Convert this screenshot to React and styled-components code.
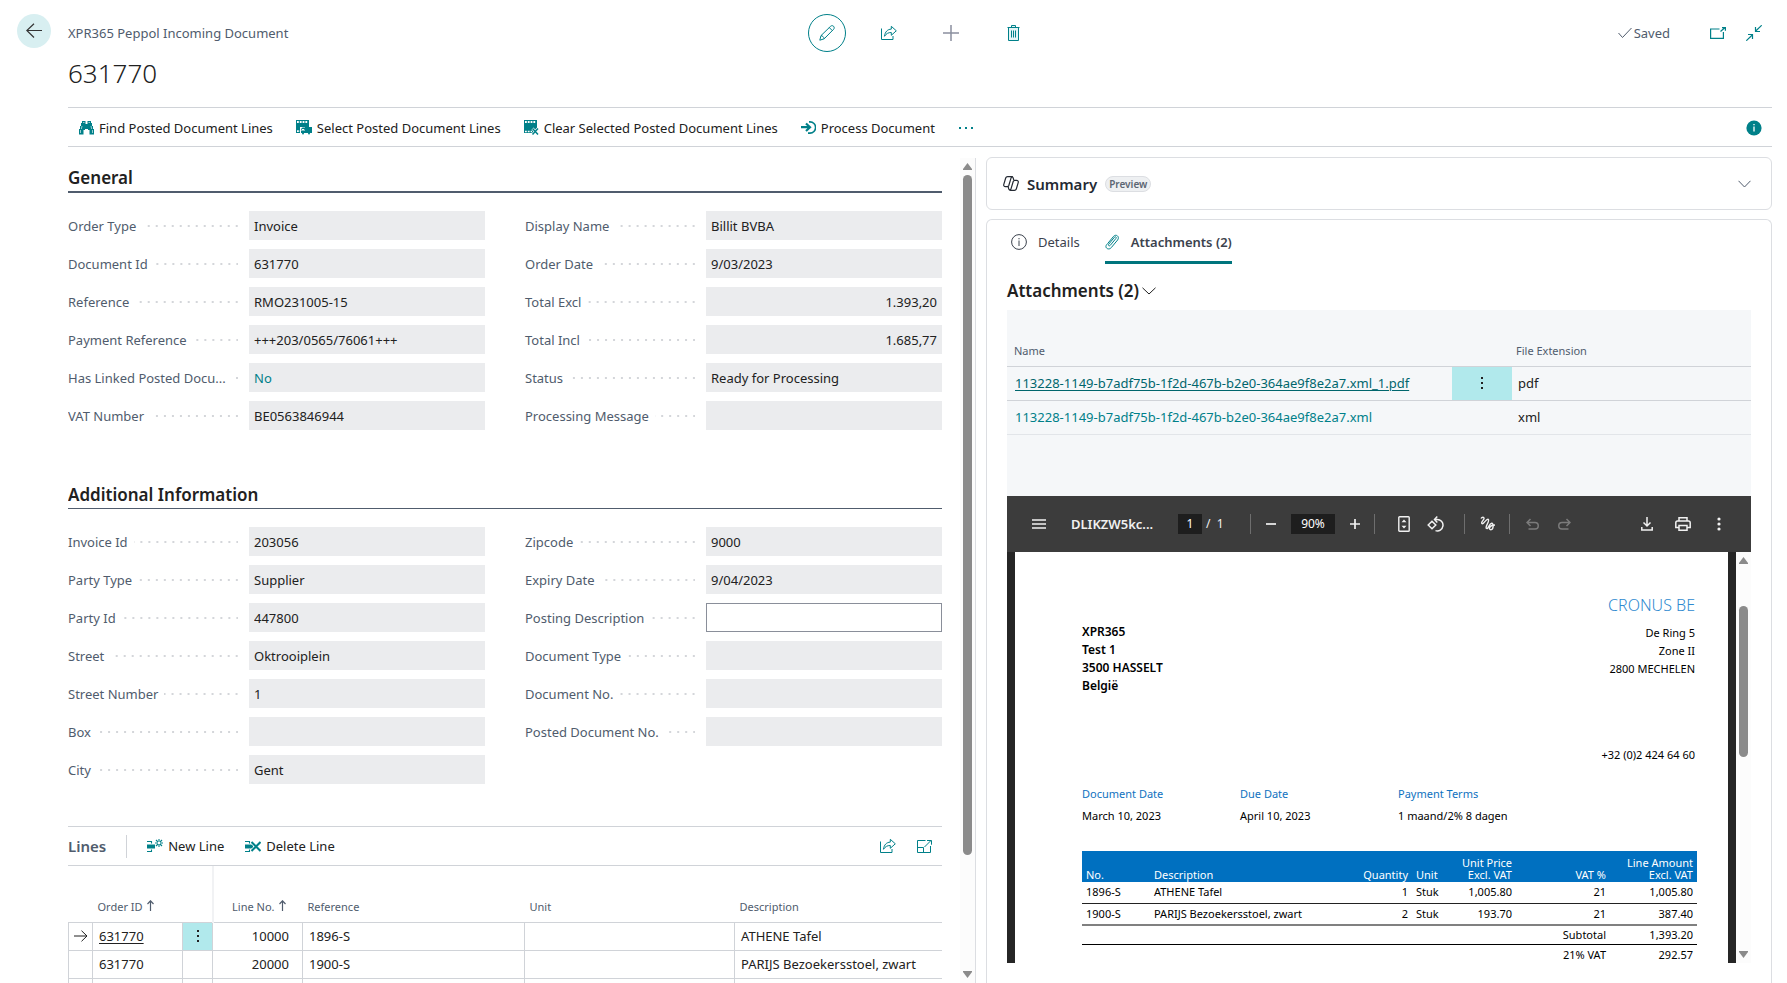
import React from 'react'
import styled, { createGlobalStyle, css } from 'styled-components'

const teal = '#008089'
const muted = '#505c6d'
const ink = '#212121'
const line = '#d0d3d8'

const GlobalStyle = createGlobalStyle`
  *, *::before, *::after { box-sizing: border-box; }
  body {
    margin: 0;
    background: #fff;
    color: ${ink};
    font-family: "Noto Sans", "Open Sans", sans-serif;
    font-size: 13px;
    line-height: 18px;
  }
  button, input { font: inherit; color: inherit; }
  h1, h2, h3, p { margin: 0; font-weight: inherit; }
`

/* ---------- shared bits ---------- */

const Svg = styled.svg`
  display: block;
  flex: none;
  width: ${(p) => p.$w || 16}px;
  height: ${(p) => p.$h || 16}px;
  fill: none;
  stroke: currentColor;
  stroke-width: ${(p) => p.$stroke || 1};
`

const Icon = ({ w = 16, h = 16, stroke, children }) => (
  <Svg $w={w} $h={h} $stroke={stroke} viewBox={`0 0 ${w} ${h}`} aria-hidden="true">
    {children}
  </Svg>
)

const PlainButton = styled.button`
  display: flex;
  align-items: center;
  padding: 0;
  border: 0;
  background: none;
  cursor: pointer;
  white-space: nowrap;
`

const IconButton = styled(PlainButton)`
  justify-content: center;
  color: ${(p) => p.$color || teal};
`

/* ---------- icons ---------- */

const BackIcon = () => (
  <Icon><path d="M16 7.500H.8M8 .8.8 7.500 8 14.500" stroke="currentColor" strokeWidth="1.200" /></Icon>
)
const PencilIcon = () => (
  <Icon>
    <path d="M.8 15.200 2 10.600 11.600 1.300c.9-.9 2.200-.8 3 0s.8 2.100 0 3L5.200 13.800.8 15.200ZM10.300 2.600l3.100 3.100M2 10.600c1.600.2 2.800 1.400 3.200 3.200" />
  </Icon>
)
const ShareIcon = () => (
  <Icon>
    <path d="M.5 3.500V14.500H12V11" />
    <path d="M3.500 11.300C4 6.700 6.600 4.300 10.300 4.100V1.300L15.300 5.800 10.300 10.300V7.500C7.300 7.500 5.300 8.500 3.500 11.300Z" />
  </Icon>
)
const PlusIcon = () => (
  <Icon stroke="1.500"><path d="M8 0v16M0 8h16" /></Icon>
)
const TrashIcon = () => (
  <Icon w={13} h={16}>
    <path d="M.5 2.500h12M4.500 2.500V.5h4v2M1.500 2.500v13h10v-13" fill="#e4f4f5" />
    <path d="M4.500 5.500v7M6.500 5.500v7M8.500 5.500v7" />
  </Icon>
)
const CheckIcon = () => (
  <Icon w={14} h={12}><path d="m.5 6 4 4.500L13.500 1" /></Icon>
)
const PopOutIcon = () => (
  <Icon w={16} h={12}>
    <path d="M9.500 2H.6v9.400h12.800V5" strokeWidth="1.200" />
    <path d="m10.500 4.500 4-3.500M12 .6h3.400v3.200" strokeWidth="1.200" />
  </Icon>
)
const CollapseIcon = () => (
  <Icon stroke="1.200">
    <path d="M15.700.3 9.500 6.300M9.500 2v4.500H14M.3 15.700 6.500 9.700M2 9.500h4.500V14" />
  </Icon>
)
const BinocularsIcon = () => (
  <Icon w={15} h={14}>
    <path
      d="M3 0h3.500v3h2V0H12v2h1v3h1v3h1v5.500h-4.500V9H9V8H6v1H4.500v4.500H0V8h1V5h1V2h1V0Z"
      fill="currentColor"
      stroke="none"
    />
    <path d="M4 1.500h1.500M9.500 1.500H11M1.500 9v3M13.500 9v3M3 5l-.7 3M12 5l.7 3" stroke="#fff" strokeWidth=".6" />
  </Icon>
)
const FilmBase = () => (
  <>
    <path d="M0 0h13v13H0z" fill="currentColor" stroke="none" />
    <path d="M1 2h11" stroke="#fff" strokeWidth="2" strokeDasharray="1.800 1" />
  </>
)
const FilmSelectIcon = () => (
  <Icon w={16} h={15}>
    <FilmBase />
    <path d="M1 11.200h3" stroke="#fff" strokeWidth="1.800" strokeDasharray="1.800 1" />
    <path d="M4 7h12v8H4z" fill="#fff" stroke="none" />
    <path d="M9 7h7v6H9zM5 9l1.500-1.500H9V13H5V9Z" fill="currentColor" stroke="none" />
    <path d="M6 11V9.500h2V11" stroke="#fff" />
    <circle cx="7" cy="13.500" r="1" fill="currentColor" stroke="none" />
    <circle cx="13" cy="13.500" r="1" fill="currentColor" stroke="none" />
  </Icon>
)
const FilmClearIcon = () => (
  <Icon w={15} h={15}>
    <FilmBase />
    <path d="M1 11.500h7" stroke="#fff" strokeWidth="1.300" strokeDasharray="1.800 1" />
    <path d="m8.500 8.500 5.500 6M14 8.500l-5.500 6" stroke="#fff" strokeWidth="2.600" />
    <path d="m8.500 8.500 5.500 6M14 8.500l-5.500 6" strokeWidth="1.500" />
  </Icon>
)
const ProcessIcon = () => (
  <Icon w={15} h={13}>
    <path d="M0 6.200h8M5 2.500l4 3.700-4 3.800" strokeWidth="2.200" />
    <path d="M8 .9h1a5.500 5.500 0 0 1 0 11.200H7" strokeWidth="1.600" />
  </Icon>
)
const DotsIcon = () => (
  <Icon w={16} h={4}>
    <path d="M1 1h2v2H1zM7 1h2v2H7zM13 1h2v2h-2z" fill="currentColor" stroke="none" />
  </Icon>
)
const InfoSolidIcon = () => (
  <Icon>
    <circle cx="8" cy="8" r="7.600" fill="currentColor" stroke="none" />
    <path d="M8 6.500V11.500M8 4v1.200" stroke="#fff" strokeWidth="1.300" />
  </Icon>
)
const CopilotIcon = () => (
  <Icon w={16} h={15} stroke="1.200">
    <path d="M10.800 4.200 10.200 2C9.900 1 9.400.6 8.500.6H4.600C3.600.6 3 1 2.700 2L.8 8.300c-.4 1.400.3 2.400 1.700 2.400h1.700c.8 0 1.300-.3 1.600-1.200L8 2.200C8.300 1.200 8.800.7 9.700.7" />
    <path d="m5.200 10.800.6 2.200c.3 1 .8 1.400 1.700 1.400h3.900c1 0 1.600-.4 1.900-1.400l1.900-6.300c.4-1.400-.3-2.400-1.700-2.400h-1.700c-.8 0-1.300.3-1.600 1.200L8 12.800c-.3 1-.8 1.500-1.700 1.500" />
  </Icon>
)
const ChevronIcon = ({ w = 14, h = 8 }) => (
  <Icon w={w} h={h}><path d={`M.5.800 ${w / 2} ${h - 1} ${w - 0.5} .8`} /></Icon>
)
const InfoIcon = () => (
  <Icon>
    <circle cx="8" cy="8" r="7.400" />
    <path d="M8 6.500v5.500M8 4v1.300" />
  </Icon>
)
const ClipIcon = () => (
  <Icon w={15} h={16}>
    <path d="M5.300 11.300 10.900 4.500M2.700 9.500 8.600 2.300C10.900-.3 15 2.500 12.700 5.900L6.300 13.600C3.700 16.700-.8 13.800 1.600 10.800L2.700 9.500M10.900 4.500C11.900 3.300 10.500 2 9.400 3.300L3.800 10.100C2.800 11.400 4.300 12.600 5.300 11.300" />
  </Icon>
)
const RowsBase = () => (
  <>
    <path d="M0 2.500h4.500v2M0 12.500h4.500v-2" strokeWidth="1.100" />
    <path d="M0 5.500h8v4H0z" fill="currentColor" stroke="none" />
  </>
)
const NewLineIcon = () => (
  <Icon w={16} h={15}>
    <RowsBase />
    <path d="M12 0v8M8 4h8M9 1l6 6M15 1 9 7" strokeWidth="1.100" />
    <circle cx="12" cy="4" r="1.400" fill="#fff" stroke="none" />
  </Icon>
)
const DeleteLineIcon = () => (
  <Icon w={16} h={15}>
    <RowsBase />
    <path d="m6.500 3 9 9M15.500 3l-9 9" stroke="#fff" strokeWidth="3.500" />
    <path d="m6.500 3 9 9M15.500 3l-9 9" strokeWidth="2" />
  </Icon>
)
const ExpandIcon = () => (
  <Icon w={15} h={13}>
    <path d="M8.500.5H.5v12h13V6M.5 7.500h6v5M7.500 7l6.300-6.300M10 .5h4.500v4.200" />
  </Icon>
)
const RowArrowIcon = () => (
  <Icon w={14} h={12}><path d="M0 6h13M7.500.7 13 6l-5.500 5.300" /></Icon>
)
const SortIcon = () => (
  <Icon w={7} h={11} stroke="1.200"><path d="M3.500 11V1M.5 4l3-3.200 3 3.200" /></Icon>
)
const MoreIcon = ({ round }) => (
  <Icon w={4} h={16}>
    {[3, 8, 13].map((y) =>
      round
        ? <circle key={y} cx="2" cy={y} r="1.600" fill="currentColor" stroke="none" />
        : <path key={y} d={`M1 ${y - 1}h2v2H1z`} fill="currentColor" stroke="none" />
    )}
  </Icon>
)

/* ---------- page header ---------- */

const Page = styled.div`
  display: flex;
  height: 100vh;
  min-height: 600px;
  overflow: hidden;
`

const BackColumn = styled.div`
  flex: none;
  width: 68px;
  padding: 14px 17px;
`

const BackButton = styled(IconButton)`
  width: 34px;
  height: 34px;
  border-radius: 50%;
  background: #d8eff1;
`

const Main = styled.main`
  flex: 1;
  min-width: 0;
  display: flex;
  flex-direction: column;
  padding-right: 15px;
`

const TopRow = styled.header`
  display: grid;
  grid-template-columns: 1fr auto 1fr;
  align-items: center;
  height: 38px;
  margin-top: 14px;
  color: ${muted};
`

const CenterActions = styled.div`
  display: flex;
  gap: 24px;
`

const RoundAction = styled(IconButton)`
  width: 38px;
  height: 38px;
  border-radius: 50%;
  border: ${(p) => (p.$active ? `1px solid ${teal}` : '0')};
`

const EndActions = styled.div`
  display: flex;
  justify-content: flex-end;
  align-items: center;
  gap: 20px;
  padding-right: 10px;
`

const Saved = styled.span`
  display: flex;
  align-items: center;
  gap: 2px;
  margin-right: 20px;
`

const DocTitle = styled.h1`
  margin-bottom: 16px;
  padding-top: 3px;
  font-size: 26px;
  font-weight: 300;
  line-height: 36px;
`

const ActionBar = styled.div`
  display: flex;
  align-items: center;
  height: 40px;
  flex: none;
  padding: 1px 10px 0 11px;
  border-top: 1px solid ${line};
  border-bottom: 1px solid ${line};
`

const ActionGroup = styled.div`
  display: flex;
  align-items: center;
  gap: 23px;
  flex: 1;
`

const ActionButton = styled(PlainButton)`
  gap: 5px;
  svg { color: ${teal}; }
`

const actions = [
  ['Find Posted Document Lines', BinocularsIcon],
  ['Select Posted Document Lines', FilmSelectIcon],
  ['Clear Selected Posted Document Lines', FilmClearIcon],
  ['Process Document', ProcessIcon],
]

const PageHeader = () => (
  <>
    <TopRow>
      <span>XPR365 Peppol Incoming Document</span>
      <CenterActions>
        <RoundAction $active aria-label="Edit"><PencilIcon /></RoundAction>
        <RoundAction aria-label="Share"><ShareIcon /></RoundAction>
        <RoundAction $color="#8a8f9e" aria-label="New"><PlusIcon /></RoundAction>
        <RoundAction aria-label="Delete"><TrashIcon /></RoundAction>
      </CenterActions>
      <EndActions>
        <Saved><CheckIcon />Saved</Saved>
        <IconButton aria-label="Open in new window"><PopOutIcon /></IconButton>
        <IconButton aria-label="Collapse"><CollapseIcon /></IconButton>
      </EndActions>
    </TopRow>
    <DocTitle>631770</DocTitle>
    <ActionBar>
      <ActionGroup>
        {actions.map(([label, Glyph]) => (
          <ActionButton key={label}><Glyph />{label}</ActionButton>
        ))}
        <IconButton aria-label="More options"><DotsIcon /></IconButton>
      </ActionGroup>
      <IconButton aria-label="Toggle FactBox"><InfoSolidIcon /></IconButton>
    </ActionBar>
  </>
)

/* ---------- scrollbar ---------- */

const ScrollTrack = styled.div`
  display: flex;
  flex-direction: column;
  align-items: center;
  flex: none;
  width: 15px;
  background: #fcfcfc;
  color: #8b8b8b;
`

const ScrollEnd = styled.div`
  display: flex;
  align-items: center;
  flex: none;
  height: 17px;
`

const ScrollSpace = styled.div`
  flex: ${(p) => p.$size} 0 0;
`

const ScrollThumb = styled.div`
  flex: ${(p) => p.$size} 0 0;
  width: 9px;
  border-radius: 5px;
  background: #8b8b8b;
`

const ScrollBar = ({ before, size }) => (
  <ScrollTrack aria-hidden="true">
    <ScrollEnd>
      <Icon w={9} h={7}><path d="M4.500 0 9 6v1H0V6z" fill="currentColor" stroke="none" /></Icon>
    </ScrollEnd>
    <ScrollSpace $size={before} />
    <ScrollThumb $size={size} />
    <ScrollSpace $size={100 - before - size} />
    <ScrollEnd>
      <Icon w={9} h={7}><path d="M0 0h9v1L4.500 7 0 1z" fill="currentColor" stroke="none" /></Icon>
    </ScrollEnd>
  </ScrollTrack>
)

/* ---------- card form ---------- */

const Body = styled.div`
  flex: 1;
  min-height: 0;
  display: grid;
  grid-template-columns: minmax(0, 908fr) minmax(0, 786fr);
  gap: 10px;
`

const FormPane = styled.div`
  display: flex;
  min-height: 0;
`

const FormScroll = styled.div`
  flex: 1;
  min-width: 0;
  overflow: hidden;
  padding-right: 18px;
`

const FormRail = styled.div`
  display: flex;
  margin-top: 11px;
  border-right: 1px solid #dcdee2;
`

const SectionTitle = styled.h2`
  margin-top: ${(p) => p.$top}px;
  padding-bottom: 1px;
  border-bottom: ${(p) => p.$rule}px solid ${muted};
  font-size: 17px;
  font-weight: 600;
  line-height: 24px;
`

const FieldGrid = styled.div`
  display: grid;
  grid-template-columns: 1fr 1fr;
  column-gap: 40px;
  padding-top: 18px;
`

const FieldColumn = styled.div`
  display: flex;
  flex-direction: column;
  gap: 9px;
`

const FieldRow = styled.div`
  display: flex;
  height: 29px;
`

const FieldLabel = styled.label`
  display: flex;
  align-items: center;
  width: 181px;
  padding-right: 11px;
  color: ${muted};
  white-space: nowrap;
  &::after {
    content: "";
    flex: 1;
    height: 2px;
    margin-left: 6px;
    background: linear-gradient(90deg, transparent 6px, #d4d6da 6px) right top / 8px 2px repeat-x;
  }
`

const FieldInput = styled.input`
  flex: 1;
  min-width: 0;
  padding: 0 5px;
  border: ${(p) => (p.readOnly ? '0' : '1px solid #8a8f9a')};
  border-radius: 0;
  outline: 0;
  background: ${(p) => (p.readOnly ? '#ebecee' : '#fff')};
  color: ${(p) => (p.$link ? teal : ink)};
  text-align: ${(p) => (p.$number ? 'right' : 'left')};
`

const general = [
  [
    { label: 'Order Type', value: 'Invoice' },
    { label: 'Document Id', value: '631770' },
    { label: 'Reference', value: 'RMO231005-15' },
    { label: 'Payment Reference', value: '+++203/0565/76061+++' },
    { label: 'Has Linked Posted Docu...', value: 'No', link: true },
    { label: 'VAT Number', value: 'BE0563846944' },
  ],
  [
    { label: 'Display Name', value: 'Billit BVBA' },
    { label: 'Order Date', value: '9/03/2023' },
    { label: 'Total Excl', value: '1.393,20', number: true },
    { label: 'Total Incl', value: '1.685,77', number: true },
    { label: 'Status', value: 'Ready for Processing' },
    { label: 'Processing Message', value: '' },
  ],
]

const additional = [
  [
    { label: 'Invoice Id', value: '203056' },
    { label: 'Party Type', value: 'Supplier' },
    { label: 'Party Id', value: '447800' },
    { label: 'Street', value: 'Oktrooiplein' },
    { label: 'Street Number', value: '1' },
    { label: 'Box', value: '' },
    { label: 'City', value: 'Gent' },
  ],
  [
    { label: 'Zipcode', value: '9000' },
    { label: 'Expiry Date', value: '9/04/2023' },
    { label: 'Posting Description', value: '', editable: true },
    { label: 'Document Type', value: '' },
    { label: 'Document No.', value: '' },
    { label: 'Posted Document No.', value: '' },
  ],
]

const Fields = ({ columns }) => (
  <FieldGrid>
    {columns.map((fields, i) => (
      <FieldColumn key={i}>
        {fields.map((f) => {
          const id = f.label.toLowerCase().replace(/[^a-z]+/g, '-')
          return (
            <FieldRow key={id}>
              <FieldLabel htmlFor={id}>{f.label}</FieldLabel>
              <FieldInput
                id={id}
                defaultValue={f.value}
                readOnly={!f.editable}
                $link={f.link}
                $number={f.number}
              />
            </FieldRow>
          )
        })}
      </FieldColumn>
    ))}
  </FieldGrid>
)

/* ---------- lines ---------- */

const LinesBar = styled.div`
  display: flex;
  align-items: center;
  height: 40px;
  margin-top: 42px;
  padding-right: 10px;
  border-top: 1px solid ${line};
  border-bottom: 1px solid ${line};
`

const LinesTitle = styled.h2`
  margin-right: 20px;
  padding-right: 20px;
  border-right: 1px solid ${line};
  color: ${muted};
  font-size: 15px;
  font-weight: 600;
  line-height: 23px;
`

const LinesActions = styled.div`
  display: flex;
  flex: 1;
  gap: 21px;
`

const LinesTools = styled.div`
  display: flex;
  gap: 21px;
`

const LinesTable = styled.table`
  width: 100%;
  table-layout: fixed;
  border-collapse: collapse;
`

const LineHead = styled.th`
  height: 56px;
  padding: 0 5px 6px;
  vertical-align: bottom;
  color: ${muted};
  font-size: 11px;
  font-weight: 400;
  text-align: ${(p) => (p.$right ? 'right' : 'left')};
  padding-right: ${(p) => (p.$right ? 17 : 5)}px;
  border-right: ${(p) => (p.$frozen ? '2px solid #f1f2f4' : '0')};
  svg { display: inline-block; margin-left: 4px; }
`

const LineCell = styled.td`
  height: 28px;
  padding: 0 6px;
  border: 1px solid ${line};
  white-space: nowrap;
  text-align: ${(p) => (p.$right ? 'right' : 'left')};
  ${(p) => p.$right && css`padding-right: 13px;`}
  ${(p) => p.$tight && css`padding: 0; svg { margin: 0 auto; }`}
  background: ${(p) => (p.$hot ? '#b1e9ec' : 'none')};
  &:last-child { border-right: 0; }
`

const OrderLink = styled.a`
  color: ${ink};
  text-decoration: ${(p) => (p.$current ? 'underline' : 'none')};
  text-underline-offset: 2px;
`

const FullButton = styled(IconButton)`
  width: 100%;
  height: 27px;
  color: ${ink};
`

const orderLines = [
  { order: '631770', no: '10000', reference: '1896-S', description: 'ATHENE Tafel' },
  { order: '631770', no: '20000', reference: '1900-S', description: 'PARIJS Bezoekersstoel, zwart' },
  {},
]

const Lines = () => (
  <section>
    <LinesBar>
      <LinesTitle>Lines</LinesTitle>
      <LinesActions>
        <ActionButton><NewLineIcon />New Line</ActionButton>
        <ActionButton><DeleteLineIcon />Delete Line</ActionButton>
      </LinesActions>
      <LinesTools>
        <IconButton aria-label="Share lines"><ShareIcon /></IconButton>
        <IconButton aria-label="Focus mode"><ExpandIcon /></IconButton>
      </LinesTools>
    </LinesBar>
    <LinesTable>
      <colgroup>
        <col width="24" /><col width="90" /><col width="30" /><col width="90" />
        <col width="222" /><col width="210" /><col />
      </colgroup>
      <thead>
        <tr>
          <LineHead />
          <LineHead>Order ID<SortIcon /></LineHead>
          <LineHead $frozen />
          <LineHead $right>Line No.<SortIcon /></LineHead>
          <LineHead>Reference</LineHead>
          <LineHead>Unit</LineHead>
          <LineHead>Description</LineHead>
        </tr>
      </thead>
      <tbody>
        {orderLines.map((row, i) => (
          <tr key={i}>
            <LineCell $tight>{i === 0 && <RowArrowIcon />}</LineCell>
            <LineCell>{row.order && <OrderLink href="#order" $current={i === 0}>{row.order}</OrderLink>}</LineCell>
            <LineCell $tight $hot={i === 0}>
              {i === 0 && <FullButton aria-label="Show more options"><MoreIcon /></FullButton>}
            </LineCell>
            <LineCell $right>{row.no}</LineCell>
            <LineCell>{row.reference}</LineCell>
            <LineCell />
            <LineCell>{row.description}</LineCell>
          </tr>
        ))}
      </tbody>
    </LinesTable>
  </section>
)

/* ---------- fact box ---------- */

const FactPane = styled.aside`
  display: flex;
  flex-direction: column;
  gap: 9px;
  min-height: 0;
  padding-top: 10px;
`

const SummaryCard = styled.section`
  display: flex;
  align-items: center;
  flex: none;
  height: 53px;
  padding: 0 20px 0 16px;
  border: 1px solid #dcdee2;
  border-radius: 6px;
  color: #242a33;
`

const SummaryTitle = styled.h2`
  margin: 0 8px;
  font-size: 15px;
  font-weight: 600;
`

const Pill = styled.span`
  margin-right: auto;
  padding: 0 3px;
  border: 1px solid #dcdee2;
  border-radius: 8px;
  background: #eef0f2;
  color: #5c6673;
  font-size: 10px;
  font-weight: 600;
  line-height: 14px;
`

const AttachCard = styled.section`
  display: flex;
  flex-direction: column;
  flex: 1;
  min-height: 0;
  padding: 0 20px 20px;
  border: 1px solid #dcdee2;
  border-bottom: 0;
  border-radius: 6px 6px 0 0;
`

const Tabs = styled.div`
  display: flex;
  gap: 25px;
  flex: none;
  height: 44px;
  padding-left: 4px;
`

const Tab = styled(PlainButton)`
  gap: 11px;
  padding-top: 3px;
  border-bottom: 3px solid ${(p) => (p.$active ? '#00757d' : 'transparent')};
  font-weight: ${(p) => (p.$active ? 600 : 400)};
  color: #3b424d;
  svg { color: ${(p) => (p.$active ? teal : 'inherit')}; }
`

const AttachTitle = styled(PlainButton)`
  flex: none;
  gap: 3px;
  height: 46px;
  padding-top: 8px;
  font-size: 17px;
  font-weight: 600;
`

const FilesBox = styled.div`
  flex: none;
  padding-bottom: 61px;
  background: #f5f7f9;
`

const FilesTable = styled.table`
  width: 100%;
  table-layout: fixed;
  border-collapse: collapse;
`

const FileHead = styled.th`
  height: 56px;
  padding: 0 0 6px ${(p) => (p.$ext ? 4 : 7)}px;
  border-bottom: 1px solid ${line};
  vertical-align: bottom;
  color: ${muted};
  font-size: 11px;
  font-weight: 400;
  text-align: left;
`

const FileCell = styled.td`
  height: 34px;
  padding: 0 0 0 ${(p) => p.$pad || 0}px;
  border-bottom: 1px solid ${(p) => (p.$current ? line : '#e2e5e9')};
  background: ${(p) => (p.$hot ? '#b1e9ec' : 'none')};
  white-space: nowrap;
`

const FileLink = styled.a`
  color: ${(p) => (p.$current ? '#00666d' : teal)};
  text-decoration: ${(p) => (p.$current ? 'underline' : 'none')};
  text-underline-offset: 2px;
`

const files = [
  { name: '113228-1149-b7adf75b-1f2d-467b-b2e0-364ae9f8e2a7.xml_1.pdf', ext: 'pdf' },
  { name: '113228-1149-b7adf75b-1f2d-467b-b2e0-364ae9f8e2a7.xml', ext: 'xml' },
]

/* ---------- pdf viewer ---------- */

const Viewer = styled.div`
  flex: 1;
  min-height: 0;
  display: flex;
  flex-direction: column;
  background: #262626;
`

const ViewerBar = styled.div`
  display: flex;
  align-items: center;
  flex: none;
  height: 56px;
  padding: 0 20px 0 25px;
  background: #3c3c3c;
  color: #f1f1f1;
`

const ViewerTitle = styled.span`
  width: 84px;
  margin: 0 23px 0 25px;
  font-weight: 600;
  white-space: nowrap;
`

const ViewerInput = styled.input`
  width: ${(p) => p.$w}px;
  height: 20px;
  padding: 0;
  border: 0;
  background: #1e1e1e;
  color: #fff;
  font-size: 12px;
  text-align: center;
`

const PageCount = styled.span`
  width: 22px;
  margin-left: 4px;
  font-size: 12px;
  white-space: pre;
`

const Rule = styled.span`
  width: 1px;
  height: 20px;
  margin: 0 ${(p) => p.$right}px 0 ${(p) => p.$left}px;
  background: #6e6e6e;
`

const Cluster = styled.div`
  display: flex;
  align-items: center;
  gap: ${(p) => p.$gap}px;
`

const ViewerEnd = styled(Cluster)`
  margin-left: auto;
  button { width: 24px; }
`

const ViewerBody = styled.div`
  flex: 1;
  min-height: 0;
  display: flex;
  padding-left: 8px;
`

const Sheet = styled.article`
  flex: 1;
  min-width: 0;
  overflow: hidden;
  margin-right: 8px;
  padding: 41px 31px 0 67px;
  background: #fff;
  color: #000;
  font-size: 11px;
`

const Parties = styled.div`
  display: flex;
  justify-content: space-between;
  padding-right: 2px;
`

const Buyer = styled.address`
  padding-top: 30px;
  font-size: 12px;
  font-style: normal;
  font-weight: 600;
`

const Seller = styled.address`
  font-style: normal;
  text-align: right;
`

const SellerName = styled.p`
  margin-bottom: 7px;
  color: #2f8ad0;
  font-size: 16px;
  font-weight: 300;
  line-height: 24px;
`

const Phone = styled.p`
  margin-top: 68px;
`

const Terms = styled.dl`
  display: grid;
  grid-template-columns: repeat(3, 158px);
  margin: 21px 0 26px;
  dt { margin-bottom: 4px; color: #0f72c0; }
  dd { margin: 0; }
`

const InvoiceTable = styled.table`
  width: 100%;
  table-layout: fixed;
  border-collapse: collapse;
  line-height: 12px;
  th {
    height: 31px;
    padding: 0 4px 1px;
    background: #0070c0;
    color: #fff;
    font-weight: 400;
    vertical-align: bottom;
  }
  td { padding: 0 4px; }
`

const InvoiceHead = styled.th`
  text-align: ${(p) => (p.$right ? 'right' : 'left')};
`

const InvoiceCell = styled.td`
  text-align: ${(p) => (p.$right ? 'right' : 'left')};
  white-space: nowrap;
`

const InvoiceRow = styled.tr`
  height: ${(p) => p.$h}px;
  border-bottom: ${(p) => p.$rule || '0'};
`

const PdfToolbar = () => (
  <ViewerBar>
    <IconButton $color="inherit" aria-label="Menu">
      <Icon w={14} h={10} stroke="1.500"><path d="M0 1h14M0 5h14M0 9h14" /></Icon>
    </IconButton>
    <ViewerTitle>DLIKZW5kc...</ViewerTitle>
    <ViewerInput $w={24} aria-label="Page number" defaultValue="1" />
    <PageCount>{'/  1'}</PageCount>
    <Rule $left={22} $right={14} />
    <Cluster $gap={14}>
      <IconButton $color="inherit" aria-label="Zoom out">
        <Icon w={12} h={12} stroke="1.700"><path d="M1 6h10" /></Icon>
      </IconButton>
      <ViewerInput $w={44} aria-label="Zoom level" defaultValue="90%" />
      <IconButton $color="inherit" aria-label="Zoom in">
        <Icon w={12} h={12} stroke="1.700"><path d="M1 6h10M6 1v10" /></Icon>
      </IconButton>
    </Cluster>
    <Rule $left={13} $right={23} />
    <Cluster $gap={17}>
      <IconButton $color="inherit" aria-label="Fit to page">
        <Icon w={12} h={16} stroke="1.400">
          <rect x=".8" y=".8" width="10.400" height="14.400" rx=".8" />
          <path d="m6 3.500 2.500 2.700h-5zM6 12.500l2.500-2.700h-5z" fill="currentColor" stroke="none" />
        </Icon>
      </IconButton>
      <IconButton $color="inherit" aria-label="Rotate">
        <Icon w={18} h={16} stroke="1.500">
          <path d="m1.200 9 3.800-3.800L8.800 9 5 12.800zM7.500 3.500h2.500a5.700 5.700 0 1 1-1.500 11.100M10.300.6 7.500 3.500l2.800 2.900" />
        </Icon>
      </IconButton>
    </Cluster>
    <Rule $left={19} $right={15} />
    <IconButton $color="inherit" aria-label="Annotate">
      <Icon w={15} h={15} stroke="1.400">
        <path d="M1 2.500C2 .8 4.200.8 4 2.600 3.700 4.300.9 5.800 1.800 7.400 3.200 9.200 6.300 2.300 8.200 3.400 10.200 4.900 4.900 10.400 6.300 12.300 8.200 14 9 7.500 11.600 7.300c2.400 0 1.900 6.400-.7 6.400-2.600-.1-1.900-4.500 4.100-4.700" />
      </Icon>
    </IconButton>
    <Rule $left={14} $right={16} />
    <Cluster $gap={19}>
      <IconButton $color="#7b7b7b" aria-label="Undo">
        <Icon w={13} h={12} stroke="1.500"><path d="M4.500 1 1 4.500 4.500 8M1 4.500h8a3 3 0 0 1 0 6.500H2.500" /></Icon>
      </IconButton>
      <IconButton $color="#7b7b7b" aria-label="Redo">
        <Icon w={13} h={12} stroke="1.500"><path d="M8.500 1 12 4.500 8.500 8M12 4.500H4a3 3 0 0 0 0 6.500h6.500" /></Icon>
      </IconButton>
    </Cluster>
    <ViewerEnd $gap={12}>
      <IconButton $color="inherit" aria-label="Download">
        <Icon w={12} h={14} stroke="1.500"><path d="M6 0v8.500M2.500 5.500 6 9l3.500-3.500M.8 10v3h10.400v-3" /></Icon>
      </IconButton>
      <IconButton $color="inherit" aria-label="Print">
        <Icon w={16} h={14} stroke="1.500">
          <path d="M4 4V.8h8V4M4 10.500H.8V5.800C.8 4.800 1.500 4 2.500 4h11c1 0 1.700.8 1.700 1.800v4.700H12M4 8.500h8v4.700H4z" />
        </Icon>
      </IconButton>
      <IconButton $color="inherit" aria-label="More actions"><MoreIcon round /></IconButton>
    </ViewerEnd>
  </ViewerBar>
)

const Invoice = () => (
  <Sheet>
    <Parties>
      <Buyer>
        XPR365<br />Test 1<br />3500 HASSELT<br />België
      </Buyer>
      <Seller>
        <SellerName>CRONUS BE</SellerName>
        <p>De Ring 5</p>
        <p>Zone II</p>
        <p>2800 MECHELEN</p>
        <Phone>+32 (0)2 424 64 60</Phone>
      </Seller>
    </Parties>
    <Terms>
      <div><dt>Document Date</dt><dd>March 10, 2023</dd></div>
      <div><dt>Due Date</dt><dd>April 10, 2023</dd></div>
      <div><dt>Payment Terms</dt><dd>1 maand/2% 8 dagen</dd></div>
    </Terms>
    <InvoiceTable>
      <colgroup>
        <col width="68" /><col /><col width="80" /><col width="40" />
        <col width="64" /><col width="94" /><col width="87" />
      </colgroup>
      <thead>
        <tr>
          <InvoiceHead>No.</InvoiceHead>
          <InvoiceHead>Description</InvoiceHead>
          <InvoiceHead $right>Quantity</InvoiceHead>
          <InvoiceHead>Unit</InvoiceHead>
          <InvoiceHead $right>Unit Price<br />Excl. VAT</InvoiceHead>
          <InvoiceHead $right>VAT %</InvoiceHead>
          <InvoiceHead $right>Line Amount<br />Excl. VAT</InvoiceHead>
        </tr>
      </thead>
      <tbody>
        <InvoiceRow $h={22} $rule="1px solid #222">
          <InvoiceCell>1896-S</InvoiceCell>
          <InvoiceCell>ATHENE Tafel</InvoiceCell>
          <InvoiceCell $right>1</InvoiceCell>
          <InvoiceCell>Stuk</InvoiceCell>
          <InvoiceCell $right>1,005.80</InvoiceCell>
          <InvoiceCell $right>21</InvoiceCell>
          <InvoiceCell $right>1,005.80</InvoiceCell>
        </InvoiceRow>
        <InvoiceRow $h={21} $rule="2px solid #808080">
          <InvoiceCell>1900-S</InvoiceCell>
          <InvoiceCell>PARIJS Bezoekersstoel, zwart</InvoiceCell>
          <InvoiceCell $right>2</InvoiceCell>
          <InvoiceCell>Stuk</InvoiceCell>
          <InvoiceCell $right>193.70</InvoiceCell>
          <InvoiceCell $right>21</InvoiceCell>
          <InvoiceCell $right>387.40</InvoiceCell>
        </InvoiceRow>
        <InvoiceRow $h={20} $rule="1px solid #000">
          <InvoiceCell $right colSpan={6}>Subtotal</InvoiceCell>
          <InvoiceCell $right>1,393.20</InvoiceCell>
        </InvoiceRow>
        <InvoiceRow $h={20}>
          <InvoiceCell $right colSpan={6}>21% VAT</InvoiceCell>
          <InvoiceCell $right>292.57</InvoiceCell>
        </InvoiceRow>
      </tbody>
    </InvoiceTable>
  </Sheet>
)

const FactBox = () => (
  <FactPane>
    <SummaryCard>
      <CopilotIcon />
      <SummaryTitle>Summary</SummaryTitle>
      <Pill>Preview</Pill>
      <IconButton $color={muted} aria-label="Expand summary"><ChevronIcon w={13} /></IconButton>
    </SummaryCard>
    <AttachCard>
      <Tabs role="tablist">
        <Tab role="tab" aria-selected="false"><InfoIcon />Details</Tab>
        <Tab role="tab" aria-selected="true" $active><ClipIcon />Attachments (2)</Tab>
      </Tabs>
      <AttachTitle>Attachments (2)<ChevronIcon w={14} /></AttachTitle>
      <FilesBox>
        <FilesTable>
          <colgroup><col /><col width="60" /><col width="239" /></colgroup>
          <thead>
            <tr>
              <FileHead>Name</FileHead>
              <FileHead />
              <FileHead $ext>File Extension</FileHead>
            </tr>
          </thead>
          <tbody>
            {files.map((f, i) => (
              <tr key={f.name}>
                <FileCell $pad={8} $current={i === 0}>
                  <FileLink href="#file" $current={i === 0}>{f.name}</FileLink>
                </FileCell>
                <FileCell $current={i === 0} $hot={i === 0}>
                  {i === 0 && <FullButton aria-label="Show more options"><MoreIcon /></FullButton>}
                </FileCell>
                <FileCell $pad={6} $current={i === 0}>{f.ext}</FileCell>
              </tr>
            ))}
          </tbody>
        </FilesTable>
      </FilesBox>
      <Viewer>
        <PdfToolbar />
        <ViewerBody>
          <Invoice />
          <ScrollBar before={10} size={40} />
        </ViewerBody>
      </Viewer>
    </AttachCard>
  </FactPane>
)

const App = () => (
  <>
    <GlobalStyle />
    <Page>
      <BackColumn>
        <BackButton $color="#333" aria-label="Back"><BackIcon /></BackButton>
      </BackColumn>
      <Main>
        <PageHeader />
        <Body>
          <FormPane>
            <FormScroll>
              <SectionTitle $top={19} $rule={2}>General</SectionTitle>
              <Fields columns={general} />
              <SectionTitle $top={53} $rule={1}>Additional Information</SectionTitle>
              <Fields columns={additional} />
              <Lines />
            </FormScroll>
            <FormRail><ScrollBar before={0} size={86} /></FormRail>
          </FormPane>
          <FactBox />
        </Body>
      </Main>
    </Page>
  </>
)

export default App
